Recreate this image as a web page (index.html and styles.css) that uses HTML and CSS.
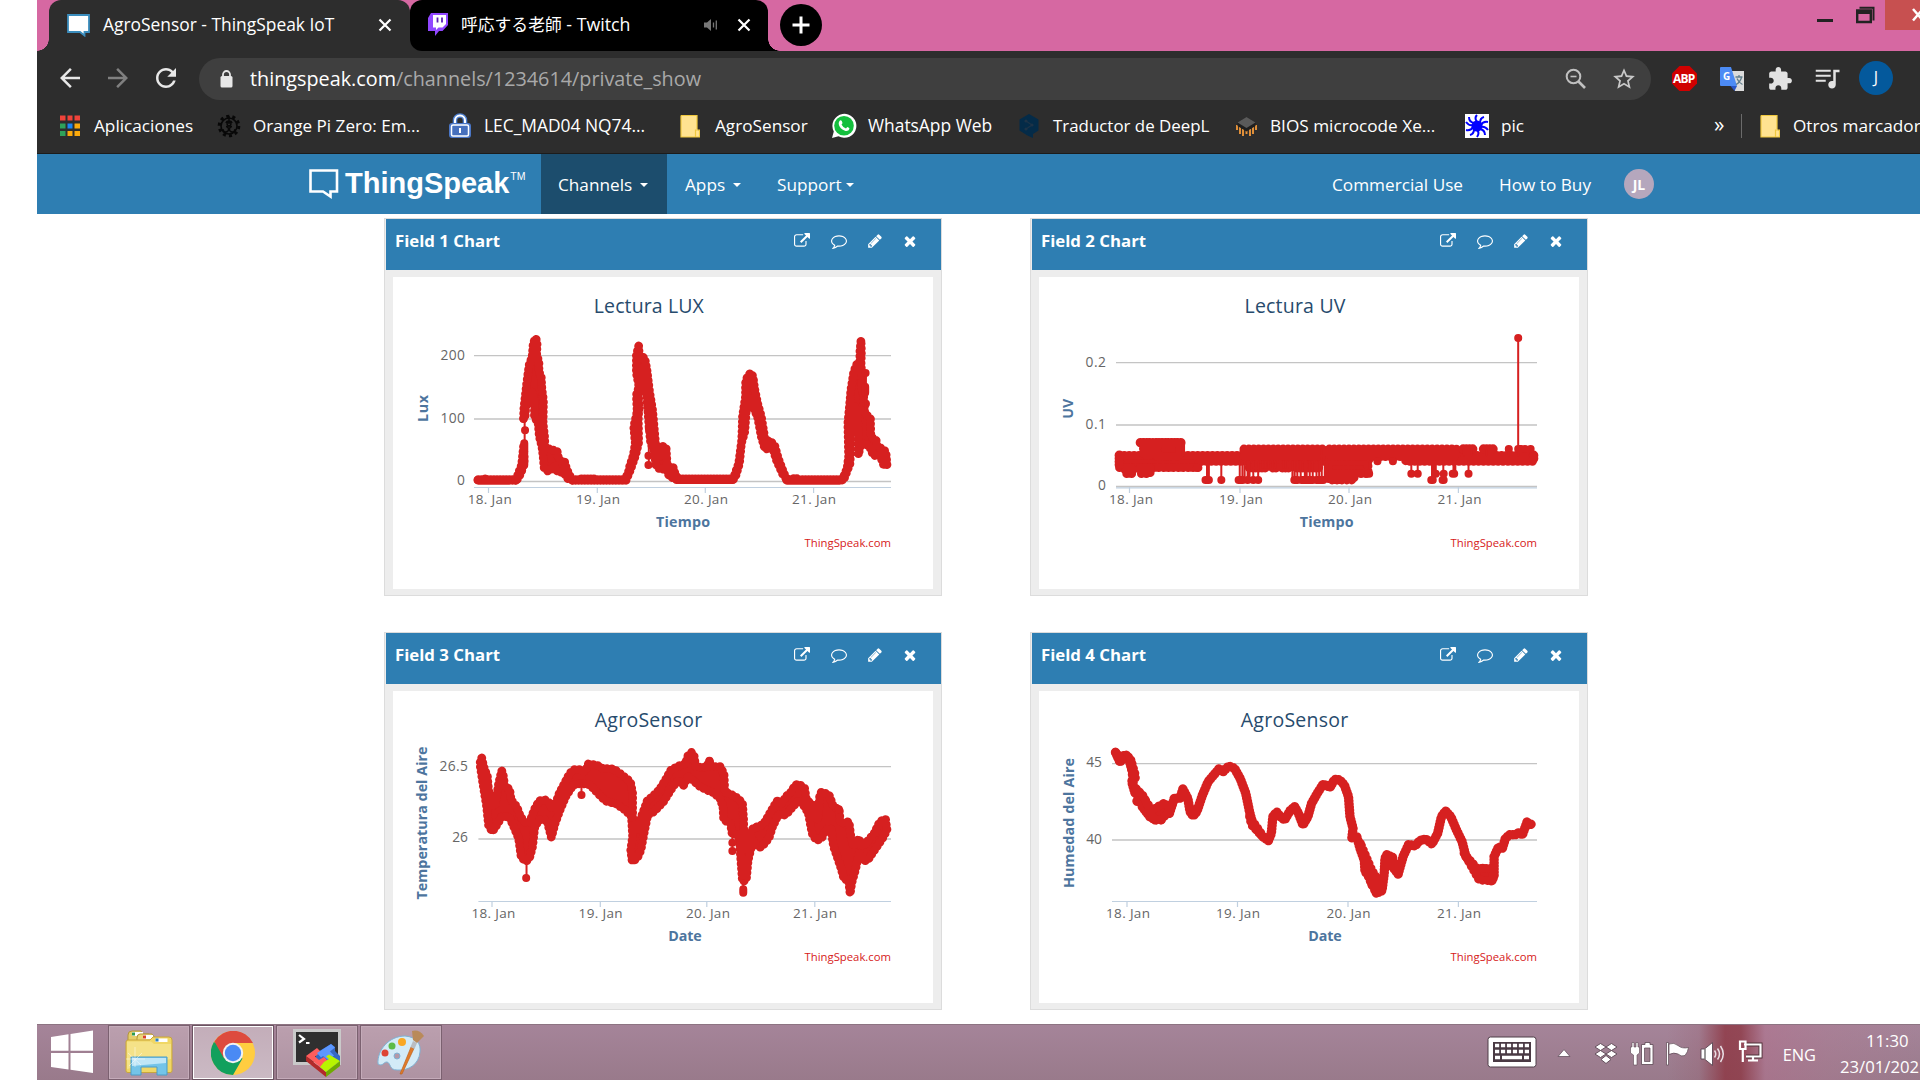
FILE: index.html
```
<!DOCTYPE html>
<html lang="es">
<head>
<meta charset="utf-8">
<title>AgroSensor - ThingSpeak IoT</title>
<link rel="stylesheet" href="styles.css">
</head>
<body>
<svg class="defs" aria-hidden="true">
  <symbol id="i-external" viewBox="0 0 1792 1792"><path d="M1408 928v320q0 119-84.5 203.5t-203.5 84.5h-832q-119 0-203.5-84.5t-84.5-203.5v-832q0-119 84.5-203.5t203.5-84.5h704q14 0 23 9t9 23v64q0 14-9 23t-23 9h-704q-66 0-113 47t-47 113v832q0 66 47 113t113 47h832q66 0 113-47t47-113v-320q0-14 9-23t23-9h64q14 0 23 9t9 23zm384-864v512q0 26-19 45t-45 19-45-19l-176-176-652 652q-10 10-23 10t-23-10l-114-114q-10-10-10-23t10-23l652-652-176-176q-19-19-19-45t19-45 45-19h512q26 0 45 19t19 45z"/></symbol>
  <symbol id="i-comment" viewBox="0 0 1792 1792"><path d="M896 384q-204 0-381.500 69.500t-282 187.500-104.500 255q0 112 71.500 213.500t201.500 175.500l87 50-27 96q-24 91-70 172 152-63 275-171l43-38 57 6q69 8 130 8 204 0 381.500-69.500t282-187.500 104.500-255-104.500-255-282-187.500-381.500-69.500zm896 512q0 174-120 321.500t-326 233-450 85.500q-70 0-145-8-198 175-460 242-49 14-114 22h-5q-15 0-27-10.500t-16-27.500v-1q-3-4-.5-12t2-10 4.500-9.500l6-9 7-8.500 8-9q7-8 31-34.500t34.500-38 31-39.500 32.500-51 27-59 26-76q-157-89-247.500-220t-90.500-281q0-174 120-321.500t326-233 450-85.500 450 85.500 326 233 120 321.500z"/></symbol>
  <symbol id="i-pencil" viewBox="0 0 1792 1792"><path d="M491 1536l91-91-235-235-91 91v107h128v128h107zm523-928q0-22-22-22-10 0-17 7l-542 542q-7 7-7 17 0 22 22 22 10 0 17-7l542-542q7-7 7-17zm-54-192l416 416-832 832h-416v-416zm683 96q0 53-37 90l-166 166-416-416 166-165q36-38 90-38 53 0 91 38l235 234q37 39 37 91z"/></symbol>
  <symbol id="i-times" viewBox="0 0 1792 1792"><path d="M1490 1322q0 40-28 68l-136 136q-28 28-68 28t-68-28l-294-294-294 294q-28 28-68 28t-68-28l-136-136q-28-28-28-68t28-68l294-294-294-294q-28-28-28-68t28-68l136-136q28-28 68-28t68 28l294 294 294-294q28-28 68-28t68 28l136 136q28 28 28 68t-28 68l-294 294 294 294q28 28 28 68z"/></symbol>
  <symbol id="i-close" viewBox="0 0 14 14"><path d="M1.500 1.500l11 11M12.500 1.500l-11 11" fill="none" stroke="#fff" stroke-width="2.200"/></symbol>
  <symbol id="i-folder" viewBox="0 0 20 24"><path d="M1 1.500H17V15L19.500 17V23H1Z" fill="#ffe391"/><path d="M1 1.500H17V15M15.500 23V16H19.500V23H1V1.500" fill="none" stroke="#f0c83e" stroke-width="1.200"/></symbol>
</svg>

<div class="screen">
  <header class="tabstrip">
    <div class="tab tab-active">
      <svg class="fav" width="24" height="23" viewBox="0 0 24 23"><path d="M1 1H22V18H17.500V21.500L13 18H1Z" fill="#fff" stroke="#3b8dbd" stroke-width="1.800"/></svg>
      <span class="tab-title">AgroSensor - ThingSpeak IoT</span>
      <svg class="x" width="14" height="14"><use href="#i-close"/></svg>
    </div>
    <div class="tab tab-dark">
      <svg class="fav" width="22" height="26" viewBox="0 0 22 26"><path d="M4 1H21V13L15.500 19H12L8 24V19H1V6Z" fill="#9147ff"/><path d="M6 3H19V12L15.500 15.500H11.500L9 18V15.500H6Z" fill="#fff"/><path d="M10.500 5.500V10.500M15 5.500V10.500" stroke="#5b1fb5" stroke-width="1.800"/></svg>
      <span class="tab-title jp">呼応する老師<span class="latin"> - Twitch</span></span>
      <svg class="snd" width="16" height="14" viewBox="0 0 16 14"><path d="M1 4.500H4L8 1V13L4 9.500H1Z" fill="#777"/><path d="M10.500 4.500V9.500M13.300 2.500V11.500" stroke="#777" stroke-width="1.300"/></svg>
      <svg class="x" width="14" height="14"><use href="#i-close"/></svg>
    </div>
    <div class="newtab"><svg width="20" height="20" viewBox="0 0 20 20"><path d="M10 1.500V18.500M1.500 10H18.500" stroke="#fff" stroke-width="3"/></svg></div>
    <div class="winbtns">
      <svg width="68" height="30" viewBox="0 0 68 30"><path d="M0 20.500H16" stroke="#222" stroke-width="3"/><path d="M42.500 7.800H56.500V20.500" fill="none" stroke="#222" stroke-width="2"/><path d="M40.200 10.500H53.800V22H40.200Z" fill="none" stroke="#222" stroke-width="2.400"/><path d="M39 12H55" stroke="#222" stroke-width="4"/></svg>
      <div class="winclose"><svg width="12" height="14" viewBox="0 0 12 14"><path d="M1 1L11 12.500M11 1L1 12.500" stroke="#fff" stroke-width="2.500"/></svg></div>
    </div>
  </header>

  <div class="toolbar">
    <svg width="30" height="30" viewBox="0 0 24 24"><path fill="#e8e8e8" d="M20 11H7.830l5.590-5.590L12 4l-8 8 8 8 1.410-1.410L7.830 13H20v-2z"/></svg>
    <svg width="30" height="30" viewBox="0 0 24 24"><path fill="#808080" d="M12 4l-1.410 1.410L16.170 11H4v2h12.170l-5.580 5.590L12 20l8-8z"/></svg>
    <svg width="30" height="30" viewBox="0 0 24 24"><path fill="#e8e8e8" d="M17.650 6.350C16.200 4.900 14.210 4 12 4c-4.420 0-7.990 3.580-7.990 8s3.570 8 7.990 8c3.730 0 6.840-2.550 7.730-6h-2.080c-.82 2.330-3.040 4-5.650 4-3.310 0-6-2.690-6-6s2.690-6 6-6c1.660 0 3.140.69 4.220 1.780L13 11h7V4l-2.350 2.350z"/></svg>
    <div class="omnibox">
      <svg width="13" height="18" viewBox="0 0 13 18"><rect x="0.500" y="6" width="12" height="11.500" rx="1.500" fill="#e8e8e8"/><path d="M3 7V4.500a3.500 3.500 0 0 1 7 0V7" fill="none" stroke="#e8e8e8" stroke-width="1.800"/></svg>
      <span class="url">thingspeak.com<span class="path">/channels/1234614/private_show</span></span>
      <svg class="zoomout" width="22" height="22" viewBox="0 0 22 22"><circle cx="8.500" cy="8.500" r="6.800" fill="none" stroke="#c0c0c0" stroke-width="2"/><path d="M13.500 13.500L20 20" stroke="#c0c0c0" stroke-width="2.600"/><path d="M5.500 8.500H11.500" stroke="#c0c0c0" stroke-width="1.600"/></svg>
      <svg width="26" height="26" viewBox="0 0 24 24"><path fill="#c8c8c8" d="M22 9.240l-7.190-.62L12 2 9.190 8.630 2 9.240l5.460 4.730L5.820 21 12 17.270 18.180 21l-1.630-7.030L22 9.240zM12 15.400l-3.760 2.270 1-4.280-3.320-2.880 4.380-.38L12 6.100l1.710 4.040 4.380.38-3.320 2.880 1 4.280L12 15.400z"/></svg>
    </div>
    <div class="abp">ABP</div>
    <svg class="translate" width="26" height="26" viewBox="0 0 26 26"><path d="M11 5H25V25H16Z" fill="#dcdcdc"/><path d="M1 2Q1 1 2 1H12L18 20H2Q1 20 1 19Z" fill="#4c8bf5"/><path d="M11.500 20H18L15.500 25Z" fill="#2a56c6"/><path d="M16.500 11H23.500M20 9V11M22.500 11.500Q21 16.500 17 18.500M18 12.500Q19.500 16.500 23.500 18.500" fill="none" stroke="#607d8b" stroke-width="1.300"/><text x="4" y="14" font-size="10" font-weight="700" fill="#fff">G</text></svg>
    <svg class="ext" width="26" height="26" viewBox="0 0 24 24"><path fill="#e2e2e2" d="M20.500 11H19V7c0-1.100-.9-2-2-2h-4V3.500C13 2.120 11.880 1 10.500 1S8 2.120 8 3.500V5H4c-1.100 0-1.990.9-1.990 2v3.800H3.500c1.490 0 2.700 1.210 2.700 2.700s-1.210 2.700-2.700 2.700H2V20c0 1.100.9 2 2 2h3.800v-1.500c0-1.490 1.210-2.700 2.700-2.700 1.490 0 2.700 1.210 2.700 2.700V22H17c1.100 0 2-.9 2-2v-4h1.500c1.380 0 2.500-1.120 2.500-2.500S21.880 11 20.500 11z"/></svg>
    <svg class="queue" width="30" height="30" viewBox="0 0 24 24"><path fill="#e2e2e2" d="M15 4.500H3v1.700h12V4.500zm0 4H3v1.700h12V8.500zM3 14.200h8v-1.700H3zM17 4.500v9.180c-.31-.11-.65-.18-1-.18-1.660 0-3 1.340-3 3s1.340 3 3 3 3-1.340 3-3V6.500h3V4.500h-5z"/></svg>
    <div class="avatar">J</div>
  </div>

  <div class="bookmarks">
    <div class="bm b1"><svg width="22" height="26" viewBox="0 0 22 26"><path d="M1 2.500H6.500V7.500H1ZM8.500 2.500H13.500V7.500H8.500ZM15.500 2.500H21V7.500H15.500Z" fill="#f0433a"/><path d="M1 10.500H6.500V15.500H1ZM1 18H6.500V23H1Z" fill="#2fa25a"/><path d="M8.500 10.500H13.500V15.500H8.500Z" fill="#1a85f5"/><path d="M15.500 10.500H21V15.500H15.500ZM8.500 18H13.500V23H8.500ZM15.500 18H21V23H15.500Z" fill="#fba90b"/></svg><span>Aplicaciones</span></div>
    <div class="bm b2"><svg width="24" height="26" viewBox="0 0 24 26"><circle cx="12" cy="13" r="8" fill="none" stroke="#080808" stroke-width="1.600"/><circle cx="12" cy="13" r="9.800" fill="none" stroke="#080808" stroke-width="3" stroke-dasharray="3 3.160"/><path d="M12 3V11M9 10a2.500 2.500 0 1 1 3 3a2.500 2.500 0 1 1 3-3M6 16a2.800 2.800 0 1 0 3-2.500M18 16a2.800 2.800 0 1 1-3-2.500" fill="none" stroke="#080808" stroke-width="1.500"/></svg><span>Orange Pi Zero: Em...</span></div>
    <div class="bm b3"><svg width="24" height="26" viewBox="0 0 24 26"><path d="M7 12V7.500a5 5 0 0 1 10 0V12" fill="none" stroke="#4f80d0" stroke-width="4.600"/><path d="M7 12V7.500a5 5 0 0 1 10 0V12" fill="none" stroke="#fff" stroke-width="2"/><rect x="1" y="10" width="22" height="15" rx="3" fill="#4a76c6"/><rect x="3.500" y="12" width="17" height="11" rx="1.500" fill="#4770bd" stroke="#fff" stroke-width="1.500"/><path d="M12 15V20" stroke="#fff" stroke-width="2"/></svg><span>LEC_MAD04 NQ74...</span></div>
    <div class="bm b4"><svg width="20" height="24"><use href="#i-folder"/></svg><span>AgroSensor</span></div>
    <div class="bm b5"><svg width="26" height="26" viewBox="0 0 26 26"><path d="M1 25L2.800 18.500A12 12 0 1 1 7.500 23.300Z" fill="#fff"/><circle cx="13" cy="12.800" r="9.800" fill="#14bf3d"/><path d="M8.200 8.500Q9.500 6.300 10.800 8L11.500 10Q11 11 10.500 11.500Q12 14.500 15 15.500L16.200 14Q18.500 14.500 18.500 15.800Q17.500 18.600 14.500 18Q8.500 16 7.700 11Q7.600 9.500 8.200 8.500Z" fill="#fff"/></svg><span>WhatsApp Web</span></div>
    <div class="bm b6"><svg width="22" height="26" viewBox="0 0 22 26"><path d="M11 1L20.500 6.500V17.500L15 21V25L9.500 22.500L1.500 17.500V6.500Z" fill="#042b48"/><path d="M8 8L14 12L8 16" fill="none" stroke="#1d3347" stroke-width="1.200"/><circle cx="8" cy="8" r="1.600" fill="#1d3347"/><circle cx="14" cy="12" r="1.600" fill="#1d3347"/><circle cx="8" cy="16" r="1.600" fill="#1d3347"/></svg><span>Traductor de DeepL</span></div>
    <div class="bm b7"><svg width="23" height="24" viewBox="0 0 23 24"><path d="M2 11V16M5 13V20M8 15V22M21 11V16M18 13V20M15 15V22M11.500 16V20" stroke="#e8943a" stroke-width="1.900"/><path d="M11.500 3L20.500 8.500V12L11.500 17.500L2.500 12V8.500Z" fill="#1f1f1f"/><path d="M11.500 3L20.500 8.500L11.500 14L2.500 8.500Z" fill="#5a5a5a"/></svg><span>BIOS microcode Xe...</span></div>
    <div class="bm b8"><svg width="24" height="24" viewBox="0 0 24 24"><path d="M0 0H24V24H0Z" fill="#fff"/><circle cx="12" cy="12" r="5.500" fill="#00f"/><path d="M12 8Q9 4 12 1M15 9Q15 4 19 3M16 11Q18 7 23 8M16 13Q20 12 23 16M15 15Q20 16 20 21M12 16Q15 19 12 23M9 15Q9 20 5 21M8 13Q6 17 1 16M8 11Q4 12 1 8M9 9Q4 8 4 3" fill="none" stroke="#00f" stroke-width="2"/></svg><span>pic</span></div>
    <div class="more">»</div>
    <div class="bm b9"><svg width="20" height="24"><use href="#i-folder"/></svg><span>Otros marcadores</span></div>
  </div>

  <nav class="sitenav">
    <div class="logo"><svg width="32" height="32" viewBox="0 0 32 32"><path d="M2.500 2.500H29V23.500H22.500V28.500L15 23.500H2.500Z" fill="none" stroke="#fff" stroke-width="2.600"/></svg><span class="wordmark">ThingSpeak</span><span class="tm">TM</span></div>
    <div class="navitem active">Channels<i class="caret"></i></div>
    <div class="navitem">Apps<i class="caret"></i></div>
    <div class="navitem tight">Support<i class="caret"></i></div>
    <div class="navright"><span class="cu">Commercial Use</span><span class="hb">How to Buy</span><span class="user">JL</span></div>
  </nav>

  <main class="content">
    <section class="panel">
      <h2 class="phead"><span class="ptitle">Field 1 Chart</span><svg class="ic e"><use href="#i-external"/></svg><svg class="ic c"><use href="#i-comment"/></svg><svg class="ic p"><use href="#i-pencil"/></svg><svg class="ic t"><use href="#i-times"/></svg></h2>
      <div class="pbody">
        <svg class="chart" width="540" height="312" viewBox="0 0 540 312">
          <text class="title" x="255.800" y="36" textLength="110">Lectura LUX</text>
          <path class="grid" d="M81 78.700H498M81 142H498M81 204.500H498"/>
          <path class="axis" d="M81 210.500H498M95.500 210V216M204.300 210V216M312.300 210V216M420.600 210V216"/>
          <text class="yl" x="72" y="83" textLength="24.500">200</text><text class="yl" x="72" y="145.500" textLength="24.500">100</text><text class="yl" x="72" y="208">0</text>
          <text class="xl" x="96.700" y="227" textLength="44">18. Jan</text><text class="xl" x="205" y="227" textLength="44">19. Jan</text><text class="xl" x="313" y="227" textLength="44">20. Jan</text><text class="xl" x="421" y="227" textLength="44">21. Jan</text>
          <text class="at" transform="translate(35 131.500) rotate(-90)" textLength="27">Lux</text>
          <text class="at" x="290" y="250" textLength="54">Tiempo</text>
          <text class="credit" x="498" y="270" textLength="86.500">ThingSpeak.com</text>
          <g class="series" transform="translate(-23 -67) scale(.37627 .33333)">
            <path class="line" d="M288 810H390M538 810H678M815 808H965M1108 810H1255M306 808L309 807M562 808H595M1126 807H1140"/>
            <path class="dots" d="M286 810h.1M410 765L410 740M410 730L410 700M412 661h.1M408 627h.1M740 737h.1M740 765h.1M741 655h.1"/>
            <path class="thin" d="M411 700V600M741 655V765"/>
            <path class="band" d="M388 810L396 785 403 765 408 710 410 750 406 775 394 806ZM408 625L409 595 414 545 417 515 423 465 431 440 434 398 441 384 444 402 443 435 449 455 449 485 455 500 457 540 461 570 460 640 464 680 465 710 482 720 497 722 502 750 517 755 522 775 530 795 538 810 526 806 515 788 498 785 490 768 475 785 463 775 460 738 457 710 450 680 447 640 437 620 437 570 431 545 422 570 414 590 412 625Z"/>
            <path class="band" d="M676 810L686 790 690 770 700 735 705 700 701 650 710 605 708 555 715 530 708 490 708 435 714 408 716 440 730 443 736 480 743 545 751 600 755 650 760 715 771 740 779 708 787 715 790 770 805 770 812 795 820 808 796 800 786 775 772 780 760 765 755 720 746 700 742 655 736 560 724 470 716 520 713 560 716 590 713 620 714 698 706 735 692 780 680 812Z"/>
            <path class="band" d="M965 808L980 760 988 690 990 620 998 560 998 520 1003 500 1012 488 1018 500 1022 535 1030 580 1040 620 1050 690 1063 693 1075 705 1085 745 1100 790 1110 810 1098 795 1080 750 1070 712 1050 718 1040 680 1030 620 1018 590 1010 560 1000 600 996 665 987 700 982 760 970 805Z"/>
            <path class="band" d="M1255 810L1268 775 1272 740 1270 640 1275 580 1278 540 1285 490 1292 465 1302 455 1302 425 1305 390 1306 425 1305 465 1308 500 1306 530 1312 560 1315 610 1330 625 1331 680 1345 690 1348 710 1360 715 1371 725 1374 765 1366 767 1355 735 1338 737 1330 715 1315 700 1305 700 1298 735 1298 650 1293 590 1284 590 1278 650 1276 760 1258 812Z"/>
            <path class="dots" d="M1317 489h.1M1316 530V548M1318 581h.1"/>
            <path class="thin" d="M1318 489V600"/>
          </g>
        </svg>
      </div>
    </section>
    <section class="panel">
      <h2 class="phead"><span class="ptitle">Field 2 Chart</span><svg class="ic e"><use href="#i-external"/></svg><svg class="ic c"><use href="#i-comment"/></svg><svg class="ic p"><use href="#i-pencil"/></svg><svg class="ic t"><use href="#i-times"/></svg></h2>
      <div class="pbody">
        <svg class="chart" width="540" height="312" viewBox="0 0 540 312">
          <text class="title" x="256" y="36" textLength="101">Lectura UV</text>
          <path class="grid" d="M77 85.700H498M77 148H498M77 209.500H498"/>
          <path class="axis" d="M77 210.800H498M90.500 210V216M201 210V216M310 210V216M419.400 210V216"/>
          <text class="yl" x="67" y="89.700" textLength="20.500">0.2</text><text class="yl" x="67" y="151.700" textLength="20.500">0.1</text><text class="yl" x="67" y="213">0</text>
          <text class="xl" x="92" y="227" textLength="44">18. Jan</text><text class="xl" x="201.900" y="227" textLength="44">19. Jan</text><text class="xl" x="311" y="227" textLength="44">20. Jan</text><text class="xl" x="420.500" y="227" textLength="44">21. Jan</text>
          <text class="at" transform="translate(34 131.700) rotate(-90)" textLength="20">UV</text>
          <text class="at" x="287.700" y="250" textLength="54">Tiempo</text>
          <text class="credit" x="498" y="270" textLength="86.500">ThingSpeak.com</text>
          <g class="series" transform="translate(-19 -67) scale(.37627 .33333)">
            <path class="band" d="M264 736H1365V754H1025V736H930V754H475V773H264Z"/>
            <path class="band" d="M328 698H348V736H328ZM364 698H424V740H364ZM280 773H300V791H280ZM320 773H346V791H320ZM820 754H925V791H820ZM820 791H888V810H820Z"/>
            <path class="band" d="M595 717H805V740H595ZM822 717H1160V740H822Z"/>
            <path class="line" d="M320 698H432M1178 717H1208M1232 717H1263M264 736V773M1365 736V754M610 773H655M672 773H684M697 773H720M735 773H800"/>
            <path class="thin" d="M497 754V810M502 754V810M535 754V810M584 754V810M591 754V810M597 754V810M605 754V810M610 754V810M620 754V810M633 754V810M645 754V773M652 754V773M660 754V773M672 754V773M680 754V773M700 754V773M706 754V773M715 754V773M724 754V810M730 754V810M737 754V810M746 754V810M757 754V810M762 754V810M770 754V810M778 754V810M788 754V810M795 754V810M802 754V810M810 754V810M816 754V810M928 754V791M1040 754V791M1057 754V791M1095 754V810M1100 754V810M1105 754V791M1125 754V810M1152 754V791M1157 754V791M1192 754V791M1324 384V736M1299 717V736M432 698V736M436 698V736M800 717V754M814 717V754M1180 717V736M1200 717V736M1240 717V736"/>
            <path class="dots" d="M493 810H502M535 810h.1M581 810H592M605 810h.1M620 810h.1M633 810h.1M729 810H737M748 810H757M766 810H778M788 810H806M925 791H928M950 754h.1M991 754h.1M1040 791h.1M1057 791h.1M1093 810H1097M1105 791h.1M1123 810H1126M1126 791h.1M1150 791H1154M1192 791h.1M1299 717h.1M1324 384h.1M1324 717H1332M1342 717h.1M1357 717h.1M470 773h.1"/>
          </g>
        </svg>
      </div>
    </section>
    <section class="panel">
      <h2 class="phead"><span class="ptitle">Field 3 Chart</span><svg class="ic e"><use href="#i-external"/></svg><svg class="ic c"><use href="#i-comment"/></svg><svg class="ic p"><use href="#i-pencil"/></svg><svg class="ic t"><use href="#i-times"/></svg></h2>
      <div class="pbody">
        <svg class="chart" width="540" height="312" viewBox="0 0 540 312">
          <text class="title" x="255.500" y="36" textLength="107.500">AgroSensor</text>
          <path class="grid" d="M85.400 75.700H498M85.400 148H498"/>
          <path class="axis" d="M85.400 210.500H498M99 210V216M207.300 210V216M313.800 210V216M421.800 210V216"/>
          <text class="yl" x="75" y="80" textLength="28.500">26.5</text><text class="yl" x="75" y="151.300">26</text>
          <text class="xl" x="100.400" y="227" textLength="44">18. Jan</text><text class="xl" x="207.600" y="227" textLength="44">19. Jan</text><text class="xl" x="315" y="227" textLength="44">20. Jan</text><text class="xl" x="422" y="227" textLength="44">21. Jan</text>
          <text class="at" transform="translate(33.500 132) rotate(-90)" textLength="153">Temperatura del Aire</text>
          <text class="at" x="292" y="250" textLength="33.500">Date</text>
          <text class="credit" x="498" y="270" textLength="86.500">ThingSpeak.com</text>
          <g class="series" transform="translate(-23 -71) scale(.37627 .33333)">
            <path class="band" d="M297 414L302 440 312 470 315 510 322 545 332 560 338 520 342 490 350 452 354 465 358 500 371 507 375 540 390 560 400 590 413 608 425 605 437 568 450 542 466 540 478 550 484 568 492 555 503 520 517 490 530 462 540 449 560 449 572 455 580 432 603 435 618 445 648 447 662 458 680 474 692 485 698 520 698 575 698 615 712 628 718 600 728 570 737 542 752 528 770 508 785 480 800 450 824 436 838 432 845 408 855 397 862 410 865 440 883 442 895 440 902 422 905 440 932 440 941 465 943 515 963 525 978 535 990 550 993 600 994 690 1004 650 1010 640 1020 622 1035 620 1050 605 1065 575 1082 543 1095 550 1105 530 1120 515 1130 495 1140 492 1155 505 1160 540 1175 552 1182 580 1190 600 1195 530 1200 515 1220 525 1230 555 1240 565 1247 568 1250 610 1273 605 1278 650 1285 680 1298 655 1310 680 1325 660 1340 640 1355 605 1370 597 1374 630 1365 650 1350 675 1335 700 1322 722 1312 722 1300 700 1290 750 1280 790 1276 822 1272 780 1260 778 1252 745 1240 705 1232 680 1225 625 1212 628 1200 655 1187 662 1175 640 1165 580 1155 560 1140 540 1120 565 1105 585 1085 585 1070 620 1060 655 1040 682 1030 680 1018 660 1005 720 1000 780 990 785 983 680 980 640 963 645 958 610 940 600 938 560 930 535 913 518 895 510 875 498 858 480 845 470 833 497 820 480 805 500 780 545 755 575 738 585 730 630 720 690 710 715 697 725 693 690 698 650 695 590 680 572 655 552 626 543 603 517 585 495 562 490 540 495 520 530 505 570 492 610 482 652 470 600 450 600 438 620 432 680 425 710 415 725 402 712 395 655 382 620 370 590 350 590 340 610 325 635 315 615 310 560 300 490 292 430Z"/>
            <path class="thin" d="M562 490V525M416 725V774M963 645V693M992 780V818"/>
            <path class="dots" d="M562 525h.1M415 774h.1M963 668h.1M963 693h.1M992 808V818M902 422h.1M1246 568h.1M696 594h.1"/>
          </g>
        </svg>
      </div>
    </section>
    <section class="panel">
      <h2 class="phead"><span class="ptitle">Field 4 Chart</span><svg class="ic e"><use href="#i-external"/></svg><svg class="ic c"><use href="#i-comment"/></svg><svg class="ic p"><use href="#i-pencil"/></svg><svg class="ic t"><use href="#i-times"/></svg></h2>
      <div class="pbody">
        <svg class="chart" width="540" height="312" viewBox="0 0 540 312">
          <text class="title" x="255.500" y="36" textLength="107.500">AgroSensor</text>
          <path class="grid" d="M73 72.700H498M73 149H498"/>
          <path class="axis" d="M73 210.500H498M88 210V216M198.500 210V216M309 210V216M419.400 210V216"/>
          <text class="yl" x="63" y="76">45</text><text class="yl" x="63" y="153">40</text>
          <text class="xl" x="89" y="227" textLength="44">18. Jan</text><text class="xl" x="199" y="227" textLength="44">19. Jan</text><text class="xl" x="309.500" y="227" textLength="44">20. Jan</text><text class="xl" x="420" y="227" textLength="44">21. Jan</text>
          <text class="at" transform="translate(35 132) rotate(-90)" textLength="130">Humedad del Aire</text>
          <text class="at" x="286" y="250" textLength="33.500">Date</text>
          <text class="credit" x="498" y="270" textLength="86.500">ThingSpeak.com</text>
          <g class="series" transform="translate(-19 -71) scale(.37627 .33333)">
            <path class="line" d="M254 397L266 427 278 404 287 408 295 440 303 470 297 485 306 520 320 530 310 545 330 540 325 560 345 590 360 600 365 560 375 600 385 550 397 580 410 535 425 535 433 507 446 535 452 575 460 588 470 575 485 525 500 485 515 465 530 445 540 455 555 438 570 445 585 475 600 520 610 575 618 610 630 630 645 650 660 662 668 640 672 590 682 576 692 590 703 600 718 572 730 560 740 580 752 615 765 590 775 550 790 520 806 492 824 502 836 478 850 480 862 495 873 530 877 590 885 625 882 655 895 650 905 690 915 720 917 755 930 770 943 770 935 795 950 785 947 820 962 812 968 760 970 715 975 704 990 712 990 740 1005 762 1018 710 1033 673 1050 678 1062 662 1078 657 1095 672 1110 640 1120 590 1131 573 1145 590 1160 630 1175 665 1185 710 1200 730 1215 760 1222 775 1230 745 1240 775 1248 745 1252 783 1260 770 1260 710 1272 680 1282 685 1290 655 1303 643 1315 645 1325 638 1335 645 1348 605 1354 615 1363 610"/>
            <path class="band" d="M254 397L266 427 270 415ZM295 420L300 490 308 470ZM308 505L330 530 345 575 358 600 375 600 400 570 385 548 350 570 325 525ZM905 670L920 755 935 795 947 820 960 810 955 785 935 750ZM1180 700L1220 780 1255 783 1258 745 1215 745ZM610 590L615 615 650 655 635 630Z"/>
          </g>
        </svg>
      </div>
    </section>
  </main>

  <footer class="taskbar">
    <div class="start"><svg width="44" height="44" viewBox="0 0 44 44"><path d="M1 7L18.500 4.200V20.800H1ZM20.500 3.900L43 0.500V20.800H20.500ZM1 23H18.500V39.500L1 37ZM20.500 23H43V43L20.500 39.800Z" fill="#fff"/></svg></div>
    <div class="task"><svg width="48" height="48" viewBox="0 0 48 48"><path d="M3 6Q3 2 7 2H16L18 5H24V20H3Z" fill="#e5cf6a" stroke="#b3953c"/><rect x="7" y="3" width="11" height="4" fill="#fff"/><rect x="7" y="3.500" width="3" height="3" fill="#2f9a4f"/><path d="M12 9Q12 5 15 5H27L30 9H46V20H12Z" fill="#ecd777" stroke="#b3953c"/><rect x="18" y="6" width="10" height="4" fill="#fff"/><rect x="18" y="6.500" width="3" height="3" fill="#d9422b"/><path d="M1 13Q1 11 3 11H25L28 8H44Q47 8 47 11V42Q47 43.500 45 43.500H3Q1 43.500 1 42Z" fill="#f0d765" stroke="#c9a63d"/><path d="M2 12.500H26L29 15H46V30L2 40Z" fill="#f8eaa0" opacity=".6"/><rect x="30.500" y="9.500" width="12" height="3.500" fill="#fff"/><rect x="30.500" y="9.500" width="3" height="3" fill="#2b7fc4"/><path d="M6 28H42V46H32V38H16V46H6Z" fill="#74c4e8" stroke="#4a9cc7"/><path d="M7 29H41V34L7 37Z" fill="#bfe6f7"/><path d="M10 18V38M1 30H20M3 24L16 36M17 24L4 37" stroke="#fff" stroke-width=".7" opacity=".7"/></svg></div>
    <div class="task on"><svg width="44" height="44" viewBox="0 0 44 44"><circle cx="22" cy="22" r="22" fill="#ffcd40"/><path d="M22 22L2.900 11A22 22 0 0 0 22 44L31.500 27.500Z" fill="#12a05d"/><path d="M3.400 10.500L12.800 27L22 22V12H42A22 22 0 0 0 3.400 10.500Z" fill="#dd4b3e"/><circle cx="22" cy="22" r="10.200" fill="#f2f2f2"/><circle cx="22" cy="22" r="8.200" fill="#4a8af4"/></svg></div>
    <div class="task"><svg width="48" height="48" viewBox="0 0 48 48"><path d="M0 0H48V36H0Z" fill="#c9c9c9"/><path d="M3 3H45V33H3Z" fill="#2f2f2f"/><path d="M6 6L11 10L6 13.500M13 14H16.500" fill="none" stroke="#fff" stroke-width="2.200"/><path d="M13 27L33 43V48L13 32Z" fill="#b32a2a"/><path d="M23 24L38 15L42 18V22L47 27V32L33 42L23 32Z" fill="#3568c4"/><path d="M13 27L24 19L28 23L22 27.500L26 31L31 28L36 33L28 38.500Z" fill="#ff5d5d"/><path d="M24 24L38 15L42 18.500L37 22.500L41 26.500L35 31L30 27L28 28.500Z" fill="#5c97ff"/><path d="M31 33L36 30L33 27.500L36 25.500L47 32L33 43L27 38Z" fill="#b8f500"/><path d="M33 43L47 32V37L33 48Z" fill="#6faa00"/></svg></div>
    <div class="task"><svg width="48" height="46" viewBox="0 0 48 46"><path d="M1 34C0 20 12 6 28 6C40 7 44 14 43 22C42 34 32 41 20 40C12 40 14 33 10 32C6 32 6 37 1 34ZM20 23A3 3 0 0 0 20 29A3 3 0 0 0 20 23Z" fill="#d3ebf7" fill-rule="evenodd" stroke="#7fb2d4"/><circle cx="8" cy="23" r="3.500" fill="#dd4434"/><circle cx="15" cy="16" r="3.500" fill="#5dbb46"/><circle cx="25" cy="12" r="4" fill="#f9a825"/><path d="M23 44L34 17L37 18.500L25 44Z" fill="#e07b2a" stroke="#b85c14" stroke-width=".6"/><path d="M33.500 17L36 11L40 13L37.500 19Z" fill="#b9bec3"/><path d="M36 10L35 1Q42-1 47 6L40 13Z" fill="#b98a5a"/></svg></div>

    <div class="tray">
      <svg class="kb" width="50" height="32" viewBox="0 0 50 32"><rect x="1" y="1" width="48" height="30" rx="2.500" fill="#fff" stroke="#4f3f49"/><rect x="6" y="6" width="38" height="20" fill="#4a3a44"/><path d="M8 9.500H42M8 15.500H42" stroke="#fff" stroke-width="3.600" stroke-dasharray="4.200 1.760"/><path d="M8 21.500H13M15 21.500H35M37 21.500H42" stroke="#fff" stroke-width="3.600"/></svg>
      <svg class="up" width="14" height="10" viewBox="0 0 14 10"><path d="M1 8.500L7 1.500L13 8.500Z" fill="#fff" stroke="#66525f" stroke-width=".8"/></svg>
      <svg class="db" width="26" height="24" viewBox="0 0 26 24"><path d="M7.500 1.500L13 5L7.500 8.500L2 5ZM18.500 1.500L24 5L18.500 8.500L13 5ZM7.500 8.500L13 12L7.500 15.500L2 12ZM18.500 8.500L24 12L18.500 15.500L13 12ZM13 13.500L18 17.500L13 21.500L8 17.500Z" fill="#fff" stroke="#5a4652" stroke-width=".9"/></svg>
      <svg class="pw" width="26" height="26" viewBox="0 0 26 26"><path d="M3 1.500H5V6H7V1.500H9V6H10.500V12L8 14V24H4.500V14L1.500 12V6H3Z" fill="#fff" stroke="#5a4652" stroke-width=".6"/><path d="M14 3.500H16V1.500H21V3.500H24V23.500H12.500V3.500Z" fill="#fff" stroke="#5a4652" stroke-width=".8"/><path d="M15.500 7H21V20.500H15.500Z" fill="#9d7f8e" stroke="#5a4652" stroke-width=".7"/></svg>
      <svg class="fl" width="26" height="26" viewBox="0 0 26 26"><path d="M1.500 1.500H3.500V24H1.500Z" fill="#fff" stroke="#5a4652" stroke-width=".7"/><path d="M4 3Q9 1 13 4.500Q17 8 23.500 6.500Q23 11 20 14.500Q16 16 13 13Q9 11 4 13.500Z" fill="#fff" stroke="#5a4652" stroke-width=".7"/></svg>
      <svg class="sp" width="26" height="26" viewBox="0 0 26 26"><path d="M1 8H4.500L12.500 1.500V24.500L4.500 18H1Z" fill="#fff" stroke="#5a4652" stroke-width=".9"/><path d="M5 8V18" stroke="#777" stroke-width="1.500"/><path d="M14.500 9.500Q17 13 14.500 16.500M17.500 7.500Q21.500 13 17.500 18.500M20.500 5Q26 13 20.500 21" fill="none" stroke="#eadfe5" stroke-width="1.500"/></svg>
      <svg class="nw" width="26" height="24" viewBox="0 0 26 24"><path d="M6 4.500H22.500V16.500H8" fill="none" stroke="#4f3038" stroke-width="4"/><path d="M6 4.500H22.500V16.500H8M15 16.500V20M10 20.500H20" fill="none" stroke="#fff" stroke-width="2.200"/><path d="M2 1.500H7.500V9H2ZM4.800 9V22" fill="none" stroke="#fff" stroke-width="2.200"/></svg>
      <span class="eng">ENG</span>
      <div class="clock"><span class="time">11:30</span><span class="date">23/01/2021</span></div>
    </div>
  </footer>
</div>
</body>
</html>
```
FILE: styles.css
```
* { box-sizing: border-box; }
body { margin: 0; background: #fff; font-family: "Open Sans", "Noto Sans", sans-serif; }
.defs { display: none; }
svg { display: block; flex: none; }
.screen { width: 1920px; height: 1080px; padding-left: 37px; overflow: hidden; display: flex; flex-direction: column; white-space: nowrap; }

/* Browser tab strip */
.tabstrip { height: 51px; flex: none; background: #d668a2; display: flex; }
.tab { position: relative; height: 51px; display: flex; align-items: center; color: #fff; font-size: 17.4px; }
.tab > svg { margin-top: -1px; }
.tab-title { line-height: 24px; margin-top: -3px; }
.tab-active { width: 361px; margin-left: 12px; padding-left: 18px; background: #2d2d2d; border-radius: 12px 12px 0 0; }
.tab-active::before { content: ""; position: absolute; left: -12px; bottom: 0; width: 12px; height: 12px; background: radial-gradient(circle at 0 0, transparent 11.5px, #2d2d2d 12px); }
.tab-active .fav { margin-right: 12px; }
.tab-active .x { margin-left: 44px; }
.tab-dark { width: 358px; padding-left: 17px; background: #000; border-radius: 12px 12px 0 12px; box-shadow: -6px 14px 0 -2px #2d2d2d; clip-path: inset(0 -12px 0 0); }
.tab-dark::after { content: ""; position: absolute; right: -12px; bottom: 0; width: 12px; height: 12px; background: radial-gradient(circle at 100% 0, transparent 11.5px, #000 12px); }
.tab-dark .fav { margin-right: 12px; }
.jp { font-family: "Noto Sans CJK JP", sans-serif; font-size: 16.8px; }
.latin { font-family: "Open Sans", sans-serif; font-size: 17.8px; }
.snd { margin-left: auto; margin-right: 18px; }
.tab-dark .x { margin-right: 17px; }
.newtab { width: 42px; height: 42px; margin: 4px 0 0 12px; border-radius: 50%; background: #000; display: flex; align-items: center; justify-content: center; }
.winbtns { margin-left: auto; display: flex; align-items: flex-start; }
.winclose { width: 35px; height: 30px; padding: 8px 0 0 27px; background: #c75050; overflow: hidden; }

/* Address bar */
.toolbar { height: 55px; flex: none; background: #2d2d2d; display: flex; align-items: center; padding-left: 18px; }
.toolbar > svg:nth-child(-n+3) { margin-right: 18px; margin-top: -2px; }
.omnibox { width: 1452px; height: 42px; background: #3f3f3f; border-radius: 21px; display: flex; align-items: center; padding: 0 14px 0 21px; }
.url { font-size: 19.800px; margin: -1px 0 0 17px; color: #fff; }
.path { color: #a9a9a9; }
.zoomout { margin-left: auto; margin-right: 24px; }
.abp { width: 25px; height: 25px; margin-left: 21px; background: #d00000; color: #fff; font-size: 12px; font-weight: 700; line-height: 25px; letter-spacing: -.8px; text-indent: 1px; clip-path: polygon(30% 0, 70% 0, 100% 30%, 100% 70%, 70% 100%, 30% 100%, 0 70%, 0 30%); }
.translate { margin-left: 22px; }
.ext { margin-left: 22px; }
.queue { margin-left: 19px; }
.avatar { width: 34px; height: 34px; margin: -2px 0 0 17px; border-radius: 50%; background: #04599c; color: #fff; font-size: 16px; line-height: 33px; text-align: center; }

/* Bookmarks bar */
.bookmarks { height: 48px; flex: none; background: #2d2d2d; border-bottom: 1px solid #1c1c1c; display: flex; align-items: center; padding: 0 0 8px 22px; color: #fff; font-size: 17.200px; }
.bm { display: flex; align-items: center; flex: none; }
.bm > span { margin-top: -1px; }
.bm > svg { margin-right: 12px; }
.b1 { width: 158px; } .b1 > svg { margin-right: 13px; }
.b2 { width: 231px; font-size: 17.100px; }
.b3 { width: 232px; font-size: 17.400px; }
.b4 { width: 151px; } .b4 > svg { margin-right: 15px; }
.b5 { width: 187px; font-size: 17.400px; } .b5 > svg { margin-right: 11px; }
.b6 { width: 217px; font-size: 16.900px; } .b6 > svg { margin-right: 13px; }
.b7 { width: 230px; }
.more { margin-left: auto; width: 28px; height: 24px; line-height: 20px; font-size: 21px; border-right: 1px solid #6b6b6b; }
.b9 { width: 160px; margin-left: 18px; } .b9 > svg { margin-right: 13px; }

/* Site navigation */
.sitenav { height: 60px; flex: none; background: #2e7eb2; display: flex; align-items: center; color: #fff; font-size: 17.200px; }
.logo { width: 504px; padding-left: 271px; display: flex; align-items: center; }
.wordmark { font: 700 29px/40px "Liberation Sans", sans-serif; margin: -3px 0 0 5px; }
.tm { font: 400 10.500px/12px "Liberation Sans", sans-serif; margin: -16px 0 0 1px; }
.navitem { height: 60px; display: flex; align-items: center; padding: 0 18px; }
.active { width: 126px; padding-left: 17px; background: #1c4d6d; }
.caret { margin: 2px 0 0 8px; border: 4.500px solid transparent; border-top-color: #fff; border-bottom: 0; }
.tight .caret { margin-left: 4px; }
.navright { margin-left: auto; margin-right: 266px; display: flex; align-items: center; }
.hb { margin: 0 33px 0 36px; }
.user { width: 30px; height: 30px; border-radius: 50%; background: #b5a7bd; font-size: 14px; font-weight: 700; line-height: 31px; text-align: center; }

/* Chart panels */
.content { height: 810px; flex: none; padding: 4px 0 0 347px; display: grid; grid-template-columns: 558px 558px; grid-auto-rows: 378px; column-gap: 88px; row-gap: 36px; }
.panel { border: 1px solid #dcdcdc; background: #ededed; }
.phead { height: 51px; margin: 0 0 0 1px; padding: 8px 23px 0 9px; background: #2e7eb2; color: #fff; display: flex; }
.ptitle { font-size: 16.800px; line-height: 28px; font-weight: 700; margin-right: auto; }
.ic { width: 16px; height: 16px; margin-top: 6px; fill: #fff; }
.c { margin-left: 21px; } .p { margin-left: 20px; } .t { margin-left: 19px; }
.pbody { padding: 7px 8px 0; }
.chart { background: #fff; }
.title { font-size: 19.500px; fill: #274b6d; text-anchor: middle; }
.yl { font-size: 13.800px; fill: #666; text-anchor: end; }
.xl { font-size: 13.500px; fill: #666; text-anchor: middle; }
.at { font-size: 14.300px; font-weight: 700; fill: #4d759e; text-anchor: middle; }
.credit { font-size: 11.300px; fill: #d62020; text-anchor: end; }
.grid { stroke: #c4c4c4; stroke-width: 1.300; }
.axis { stroke: #c0d0e0; stroke-width: 1.200; fill: none; }
.series path { fill: none; stroke: #d62020; stroke-width: 8px; stroke-linejoin: round; stroke-linecap: round; vector-effect: non-scaling-stroke; }
.series .band { fill: #d62020; stroke-width: 8.800px; stroke-dasharray: .1 4.800; }
.series .line { stroke-width: 9.500px; stroke-dasharray: .1 3; }
.series .thin { stroke-width: 2px; }

/* Desktop taskbar */
.taskbar { height: 56px; flex: none; border-top: 1px solid #8d7482; display: flex; background: linear-gradient(90deg, transparent 1630px, rgba(140,50,65,.12) 1662px, rgba(140,48,60,.75) 1688px, rgba(140,48,60,.72) 1704px, rgba(180,110,140,.5) 1728px, rgba(176,120,145,.35) 1790px, transparent 1883px), linear-gradient(#a58499, #997a8b); }
.start { width: 71px; padding: 5px 0 0 13px; }
.task { width: 82px; height: 55px; margin-right: 2px; border: 1px solid #7b6170; box-shadow: inset 0 0 0 1px #c4abb9; background: linear-gradient(#bb9fae, #ae93a2); display: flex; align-items: center; justify-content: center; }
.on { border-color: #6b5361; box-shadow: inset 0 0 0 1px #fff; background: linear-gradient(#c3adb9, #cbbac4); }
.tray { margin-left: auto; display: flex; align-items: center; color: #fff; padding-top: 2px; }
.kb { margin-right: 20px; margin-top: -3px; }
.up { margin-right: 22px; margin-top: -2px; }
.db { margin-right: 10px; }
.pw { margin-right: 10px; }
.fl { margin-right: 9px; }
.sp { margin-right: 12px; }
.nw { margin-right: 19px; margin-top: -3px; }
.eng { font-size: 16.400px; margin-right: 24px; margin-top: 1px; }
.clock { width: 80px; display: flex; flex-direction: column; font-size: 16.700px; line-height: 26px; padding-top: 1px; }
.time { margin-left: 26px; }
```
